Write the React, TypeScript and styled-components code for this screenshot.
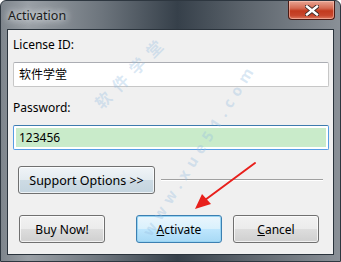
import styled, { createGlobalStyle } from 'styled-components';

const GlobalStyle = createGlobalStyle`
  html, body {
    margin: 0;
    padding: 0;
    background: #ffffff;
  }
  body {
    font-family: "Noto Sans", "Noto Sans CJK SC", sans-serif;
  }
`;

const Window = styled.div`
  position: relative;
  width: 341px;
  height: 262px;
  box-sizing: border-box;
  border: 1px solid #2e3740;
  border-radius: 6px 6px 0 0;
  background: linear-gradient(
    90deg,
    #7e858c 0%,
    #9aa0a6 8%,
    #6c747c 30%,
    #36404a 52%,
    #5c646c 72%,
    #8a9097 100%
  );
  display: flex;
  flex-direction: column;
  overflow: hidden;
`;

const TitleBar = styled.div`
  height: 28px;
  display: flex;
  align-items: flex-start;
  justify-content: space-between;
  padding-left: 7px;
`;

const Title = styled.span`
  margin-top: 6px;
  font-size: 12.5px;
  color: #1a1a1a;
  text-shadow: 0 0 6px #e8ecef, 0 0 10px #e8ecef;
`;

const CloseButton = styled.div`
  width: 47px;
  height: 19px;
  margin-right: 5px;
  box-sizing: border-box;
  border: 1px solid #4a1a14;
  border-top: none;
  border-radius: 0 0 4px 4px;
  background: linear-gradient(180deg, #e8a593 0%, #d46a52 40%, #c23a1e 55%, #c7462c 80%, #dd7a60 100%);
  display: flex;
  align-items: center;
  justify-content: center;
  box-shadow: inset 0 0 0 1px rgba(255, 210, 195, 0.5);
`;

const Client = styled.div`
  flex: 1;
  margin: 0 6px 6px 6px;
  box-sizing: border-box;
  border: 1px solid #2a333c;
  background: #f0f0f0;
  padding: 6px 5px 0 5px;
  display: flex;
  flex-direction: column;
`;

const Label = styled.div<{ $gap?: number }>`
  font-size: 12px;
  color: #000;
  height: 18px;
  line-height: 18px;
  margin-top: ${p => p.$gap ?? 0}px;
`;

const Field = styled.div<{ $filled?: boolean }>`
  height: 25px;
  box-sizing: border-box;
  margin: 8px 0 0 0;
  width: 316px;
  border: 1px solid ${p => (p.$filled ? '#569de5' : '#c7c7c7')};
  border-top-color: ${p => (p.$filled ? '#3d7bad' : '#abadb3')};
  border-radius: 2px;
  background: #ffffff;
  padding: 2px;
  display: flex;
`;

const FieldInner = styled.div<{ $filled?: boolean }>`
  flex: 1;
  background: ${p => (p.$filled ? '#c9ebca' : '#ffffff')};
  font-size: 12px;
  color: #000;
  line-height: 19px;
  padding-left: 3px;
`;

const SupportRow = styled.div`
  display: flex;
  align-items: center;
  margin-top: 16px;
  padding-left: 5px;
  gap: 6px;
`;

const Rule = styled.div`
  width: 162px;
  height: 0;
  border-top: 1px solid #a0a0a0;
  border-bottom: 1px solid #ffffff;
`;

const Button = styled.div<{ $width: number; $default?: boolean; $tinted?: boolean }>`
  width: ${p => p.$width}px;
  height: 28px;
  box-sizing: border-box;
  border: 1px solid ${p => (p.$default ? '#3c7fb1' : '#707070')};
  border-radius: 3px;
  font-size: ${p => (p.$tinted ? 12.5 : 12)}px;
  color: #000;
  display: flex;
  align-items: center;
  justify-content: center;
  background: ${p =>
    p.$default
      ? 'linear-gradient(180deg, #eaf6fd 0%, #d9f0fc 50%, #bee6fd 51%, #a7d9f5 100%)'
      : p.$tinted
      ? 'linear-gradient(180deg, #f0f4f7 0%, #e3ebf0 50%, #cddbe4 51%, #c4d4df 100%)'
      : 'linear-gradient(180deg, #f2f2f2 0%, #ebebeb 50%, #dddddd 51%, #cfcfcf 100%)'};
  box-shadow: inset 0 0 0 1px ${p => (p.$default ? '#97d4f3' : 'rgba(255,255,255,0.7)')};
`;

const ButtonRow = styled.div`
  display: flex;
  margin-top: 21px;
  padding-left: 6px;
  gap: 31px;
  & > :last-child {
    margin-left: -20px;
  }
`;

const Mnemonic = styled.span`
  text-decoration: underline;
`;

const Watermark = styled.div<{ $size: number; $spacing: number; $angle: number }>`
  position: absolute;
  font-size: ${p => p.$size}px;
  font-weight: bold;
  color: rgba(150, 190, 225, 0.35);
  transform: translate(-50%, -50%) rotate(${p => p.$angle}deg);
  white-space: nowrap;
  letter-spacing: ${p => p.$spacing}px;
  pointer-events: none;
`;

const Arrow = styled.svg`
  position: absolute;
  left: 190px;
  top: 158px;
  pointer-events: none;
`;

export default function App() {
  return (
    <>
      <GlobalStyle />
      <Window>
        <TitleBar>
          <Title>Activation</Title>
          <CloseButton>
            <svg width="14" height="11" viewBox="0 0 14 11">
              <path
                d="M2 1.5 L12 9.5 M12 1.5 L2 9.5"
                stroke="#3a2a28"
                strokeWidth="4.2"
                strokeLinecap="square"
              />
              <path
                d="M2 1.5 L12 9.5 M12 1.5 L2 9.5"
                stroke="#ffffff"
                strokeWidth="2.4"
                strokeLinecap="square"
              />
            </svg>
          </CloseButton>
        </TitleBar>
        <Client>
          <Label>License ID:</Label>
          <Field>
            <FieldInner>软件学堂</FieldInner>
          </Field>
          <Label $gap={12}>Password:</Label>
          <Field $filled>
            <FieldInner $filled>123456</FieldInner>
          </Field>
          <SupportRow>
            <Button $width={137} $tinted>Support Options &gt;&gt;</Button>
            <Rule />
          </SupportRow>
          <ButtonRow>
            <Button $width={86}>Buy Now!</Button>
            <Button $width={86} $default>
              <Mnemonic>A</Mnemonic>ctivate
            </Button>
            <Button $width={86}>
              <Mnemonic>C</Mnemonic>ancel
            </Button>
          </ButtonRow>
        </Client>
        <Watermark $size={16} $spacing={8} $angle={-45} style={{ left: 130, top: 70 }}>
          软件学堂
        </Watermark>
        <Watermark $size={15} $spacing={6} $angle={-58} style={{ left: 198, top: 148 }}>
          www.xue51.com
        </Watermark>
        <Arrow width="70" height="56" viewBox="0 0 70 56">
          <line x1="64" y1="4" x2="14" y2="41" stroke="#e8201c" strokeWidth="2" strokeLinecap="round" />
          <polygon points="4,50 11,35 20,45" fill="#e8201c" />
        </Arrow>
      </Window>
    </>
  );
}
